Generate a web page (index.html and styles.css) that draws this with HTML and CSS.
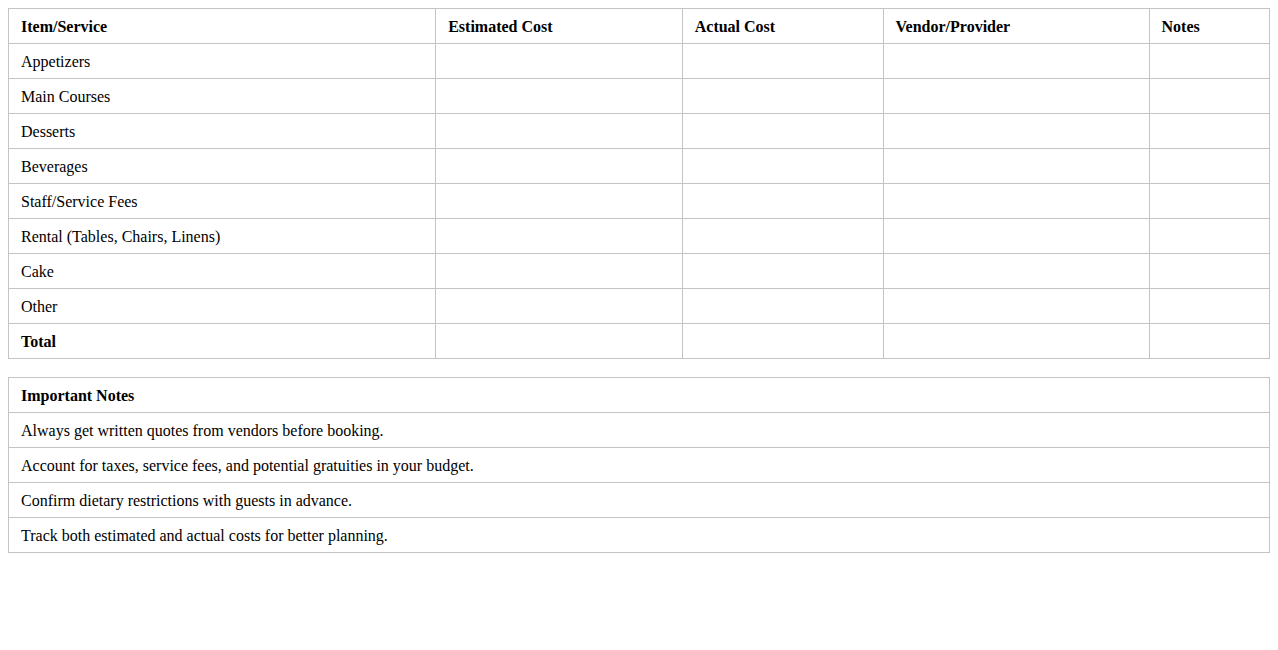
FILE: index.html
```html
<!DOCTYPE html>
<html lang="en">
<head>
<meta charset="utf-8">
<title>Catering Budget</title>
<link rel="stylesheet" href="styles.css">
</head>
<body>
<table class="budget">
  <thead>
    <tr>
      <th>Item/Service</th>
      <th>Estimated Cost</th>
      <th>Actual Cost</th>
      <th>Vendor/Provider</th>
      <th>Notes</th>
    </tr>
  </thead>
  <tbody>
    <tr><td>Appetizers</td><td></td><td></td><td></td><td></td></tr>
    <tr><td>Main Courses</td><td></td><td></td><td></td><td></td></tr>
    <tr><td>Desserts</td><td></td><td></td><td></td><td></td></tr>
    <tr><td>Beverages</td><td></td><td></td><td></td><td></td></tr>
    <tr><td>Staff/Service Fees</td><td></td><td></td><td></td><td></td></tr>
    <tr><td>Rental (Tables, Chairs, Linens)</td><td></td><td></td><td></td><td></td></tr>
    <tr><td>Cake</td><td></td><td></td><td></td><td></td></tr>
    <tr><td>Other</td><td></td><td></td><td></td><td></td></tr>
    <tr class="total"><td>Total</td><td></td><td></td><td></td><td></td></tr>
  </tbody>
</table>

<table class="notes">
  <thead>
    <tr><th>Important Notes</th></tr>
  </thead>
  <tbody>
    <tr><td>Always get written quotes from vendors before booking.</td></tr>
    <tr><td>Account for taxes, service fees, and potential gratuities in your budget.</td></tr>
    <tr><td>Confirm dietary restrictions with guests in advance.</td></tr>
    <tr><td>Track both estimated and actual costs for better planning.</td></tr>
  </tbody>
</table>
</body>
</html>
```

FILE: styles.css
```css
body {
  margin: 8px;
  font-family: "Liberation Serif", "Times New Roman", serif;
  font-size: 16px;
  color: #000;
  background: #fff;
}

table {
  width: 100%;
  border-collapse: collapse;
}

th, td {
  border: 1px solid #c4c4c4;
  padding: 9px 12px 7px;
  text-align: left;
  line-height: 18px;
  height: 18px;
}

th {
  font-weight: bold;
}

.total td:first-child {
  font-weight: bold;
}

.budget {
  margin-bottom: 18px;
}
```
